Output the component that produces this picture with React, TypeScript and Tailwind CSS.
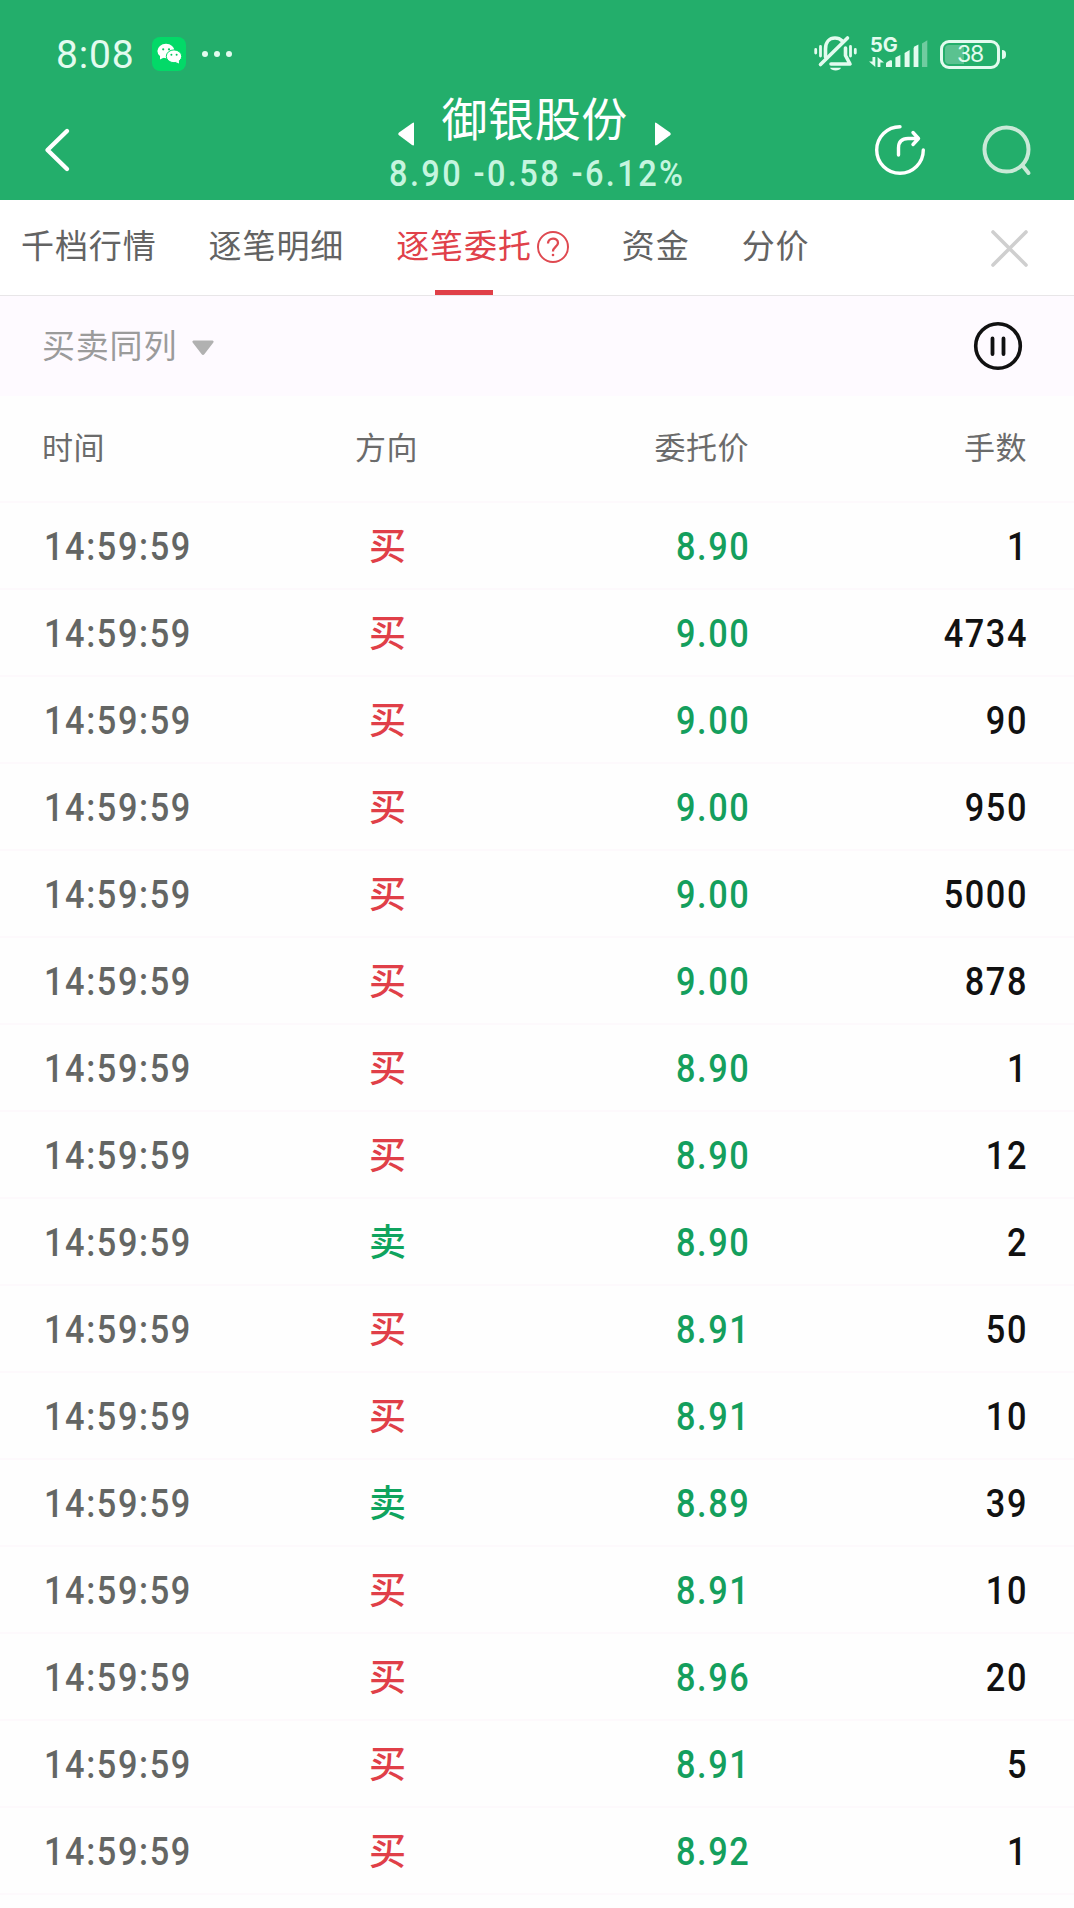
type Side = "buy" | "sell";

type Order = {
  side: Side;
  price: string;
  lots: number;
};

const orders: Order[] = [
  { side: "buy", price: "8.90", lots: 1 },
  { side: "buy", price: "9.00", lots: 4734 },
  { side: "buy", price: "9.00", lots: 90 },
  { side: "buy", price: "9.00", lots: 950 },
  { side: "buy", price: "9.00", lots: 5000 },
  { side: "buy", price: "9.00", lots: 878 },
  { side: "buy", price: "8.90", lots: 1 },
  { side: "buy", price: "8.90", lots: 12 },
  { side: "sell", price: "8.90", lots: 2 },
  { side: "buy", price: "8.91", lots: 50 },
  { side: "buy", price: "8.91", lots: 10 },
  { side: "sell", price: "8.89", lots: 39 },
  { side: "buy", price: "8.91", lots: 10 },
  { side: "buy", price: "8.96", lots: 20 },
  { side: "buy", price: "8.91", lots: 5 },
  { side: "buy", price: "8.92", lots: 1 },
];

const tabs = ["千档行情", "逐笔明细", "逐笔委托", "资金", "分价"];

function WechatIcon() {
  return (
    <svg className="ml-[18px] h-[34px] w-[34px]" viewBox="0 0 34 34">
      <rect width="34" height="34" rx="8" fill="#03d968" />
      <ellipse cx="14" cy="14" rx="8.6" ry="7.2" fill="#fff" />
      <path d="M8 18.5 L8 22.5 L13 20 Z" fill="#fff" />
      <ellipse cx="22" cy="19.3" rx="7.7" ry="6.4" fill="#fff" stroke="#03d968" strokeWidth="1" />
      <path d="M23.5 25 L27 26.5 L26.8 23 Z" fill="#fff" />
      <circle cx="11.2" cy="12.3" r="1.1" fill="#03c75f" />
      <circle cx="17" cy="12.3" r="1.1" fill="#03c75f" />
      <circle cx="19.4" cy="17.8" r="1" fill="#03c75f" />
      <circle cx="24.6" cy="17.8" r="1" fill="#03c75f" />
    </svg>
  );
}

function MutedBellIcon() {
  return (
    <svg className="h-[38px] w-[44px]" viewBox="0 0 44 38" fill="none" stroke="#e3fbef" strokeLinecap="round">
      <path d="M1.7 14.5 V18 M6.5 11.5 V21 M36.5 11.5 V21 M41.3 14.5 V18" strokeWidth="2.8" />
      <path
        d="M11.5 22 V14 C11.5 7 15.5 3 21 3 C24 3 26.3 4 28 5.8 M31.5 13 V20.5 L36 29 H17"
        strokeWidth="3.6"
        strokeLinejoin="round"
      />
      <path d="M33.5 3 L6.5 29.5" strokeWidth="3.6" />
      <path d="M16 32.8 H27 C25.8 36.5 17.5 36.5 16 32.8 Z" fill="#e3fbef" stroke="none" />
    </svg>
  );
}

function SignalIcon() {
  return (
    <div className="ml-[11px] grid h-[38px] w-[60px]">
      <span className="col-start-1 row-start-1 ml-[1px] font-['Inter'] text-[20px] leading-[20px] font-bold">
        5G
      </span>
      <svg className="col-start-1 row-start-1 h-[38px] w-[60px]" viewBox="0 0 60 38" fill="#e3fbef">
        <path d="M3.5 22 H6.3 V32 L0 26.5 H3.5 Z M8.6 32 V22 L15 27.5 H11.4 V32 Z" />
        <path d="M17 32 V28.5 C17 27 23 24 23 26 V32 Z" />
        <path d="M26.4 32 V22.5 L31.4 20 V32 Z" />
        <path d="M35.6 32 V18 L40.6 15 V32 Z" />
        <path d="M44.6 32 V13.5 Q44.6 12 46 11.2 L49.4 9.5 V32 Z" />
        <path d="M53 32 V8.5 L58.3 5.2 V32 Z" opacity="0.4" />
      </svg>
    </div>
  );
}

function Battery() {
  return (
    <div className="ml-[11px] flex items-center">
      <div className="grid h-[29px] w-[60px] rounded-[9px] border-[3px] border-[#e3fbef]">
        <div className="col-start-1 row-start-1 m-[2px] w-[19px] rounded-l-[4px] bg-white/25" />
        <span className="col-start-1 row-start-1 text-center font-['Inter'] text-[23px] leading-[23px] tracking-[-1.2px]">
          38
        </span>
      </div>
      <div className="ml-[2px] h-[9px] w-[4px] rounded-r-full bg-[#e3fbef]" />
    </div>
  );
}

function StatusBar() {
  return (
    <div className="flex h-[72px] items-start pt-[36px] pr-[68px] pl-[56px] text-[#e3fbef]">
      <span className="w-[78px] text-[39px] leading-[38px] tracking-[0.8px]">8:08</span>
      <div className="flex h-[36px] items-center">
        <WechatIcon />
        <div className="ml-[16px] flex gap-[6px]">
          <i className="h-[6px] w-[6px] rounded-full bg-[#e3fbef]" />
          <i className="h-[6px] w-[6px] rounded-full bg-[#e3fbef]" />
          <i className="h-[6px] w-[6px] rounded-full bg-[#e3fbef]" />
        </div>
      </div>
      <div className="ml-auto flex h-[36px] items-center">
        <MutedBellIcon />
        <SignalIcon />
        <Battery />
      </div>
    </div>
  );
}

function NavBar() {
  return (
    <div className="flex h-[128px] pr-[38px] pl-[40px]">
      <svg className="mt-[52px] h-[52px] w-[40px] shrink-0" viewBox="0 0 40 52" fill="none">
        <path d="M27 7 L7.5 26 L27 45" stroke="#fff" strokeWidth="4.4" strokeLinecap="round" strokeLinejoin="round" />
      </svg>

      <div className="ml-[303px] w-[302px] shrink-0">
        <div className="flex items-end justify-center pt-[16px]">
          <svg className="mb-[-2px] h-[24px] w-[17px]" viewBox="0 0 17 24">
            <path d="M16 1 Q16 0 14.5 1 L1 10.5 Q-0.5 12 1 13.2 L14 23 Q16 24 16 22.5 Z" fill="#fff" />
          </svg>
          <h1 className="mr-[26px] ml-[27px] w-[186px] font-['Noto_Sans_CJK_SC'] text-[46px] leading-[56px] font-normal tracking-[0.6px] whitespace-nowrap text-white">
            御银股份
          </h1>
          <svg className="mb-[-2px] h-[24px] w-[17px]" viewBox="0 0 17 24">
            <path d="M1 1 Q1 0 2.5 1 L16 10.5 Q17.5 12 16 13.2 L3 23 Q1 24 1 22.5 Z" fill="#fff" />
          </svg>
        </div>
        <p className="mt-[4px] ml-[6px] w-[340px] origin-left scale-x-88 text-[37px] leading-[52px] font-medium tracking-[2.7px] whitespace-nowrap text-[#c5f5df]">
          8.90 -0.58 -6.12%
        </p>
      </div>

      <svg className="mt-[50px] ml-auto h-[56px] w-[56px] shrink-0" viewBox="0 0 56 56" fill="none" stroke="#fff" strokeWidth="3.4" strokeLinecap="round" strokeLinejoin="round">
        <path d="M28 4.7 A23.3 23.3 0 1 0 51.3 28" />
        <path d="M26.5 33 V26 C26.5 20 29.5 16.5 36 16.5 H46 M41 10.5 L46.5 16.5 L41 22.5" />
      </svg>
      <svg className="mt-[50px] ml-[52px] h-[56px] w-[56px] shrink-0" viewBox="0 0 56 56" fill="none" stroke="#c9e9d7" strokeWidth="4" strokeLinecap="round">
        <circle cx="26.5" cy="27.5" r="22" />
        <path d="M42.5 43.5 L48.5 51" />
      </svg>
    </div>
  );
}

function HelpIcon() {
  return (
    <svg className="mt-[6px] ml-[4px] h-[34px] w-[34px]" viewBox="0 0 34 34" fill="none" stroke="#df4950" strokeWidth="2">
      <circle cx="17" cy="17" r="15" />
      <path d="M12 13.5 C12 7 22 7 22 13 C22 16.5 17 17 17 21.5" strokeWidth="2.3" />
      <circle cx="17" cy="25" r="1.3" fill="#df4950" stroke="none" />
    </svg>
  );
}

function TabBar() {
  return (
    <div className="flex h-[96px] border-b border-[#e8e6e8] bg-white pr-[44px] pl-[21px]">
      <div className="flex gap-[52px] font-['Noto_Sans_CJK_SC'] text-[33px] leading-[48px] tracking-[0.9px] text-[#636363]">
        {tabs.map((tab) =>
          tab === "逐笔委托" ? (
            <div key={tab} className="flex h-[95px] flex-col justify-between text-[#e0414a]">
              <div className="mt-[20px] flex items-center">
                {tab}
                <HelpIcon />
              </div>
              <div className="ml-[39px] h-[5px] w-[58px] bg-[#e04048]" />
            </div>
          ) : (
            <div key={tab} className="pt-[20px]">
              {tab}
            </div>
          )
        )}
      </div>
      <svg className="mt-[28px] ml-auto h-[40px] w-[40px]" viewBox="0 0 40 40">
        <path d="M3 4 L36 37 M36 4 L3 37" stroke="#cfcfcf" strokeWidth="3.6" strokeLinecap="round" />
      </svg>
    </div>
  );
}

function FilterBar() {
  return (
    <div className="flex h-[100px] items-center bg-[#fefaff] pr-[51px] pl-[42px]">
      <span className="mb-[5px] font-['Noto_Sans_CJK_SC'] text-[33px] leading-[48px] tracking-[0.8px] text-[#9b9b9b]">
        买卖同列
      </span>
      <svg className="mt-[4px] ml-[15px] h-[16px] w-[22px]" viewBox="0 0 22 16">
        <path d="M1.5 0.5 H20.5 Q22.5 1 21 3 L12.5 14 Q11 16 9.5 14 L1 3 Q-0.5 1 1.5 0.5 Z" fill="#b1b1b1" />
      </svg>
      <svg className="ml-auto h-[50px] w-[50px]" viewBox="0 0 50 50" fill="none" stroke="#111" strokeLinecap="round">
        <circle cx="25" cy="25" r="22.3" strokeWidth="3.6" />
        <path d="M19.5 17.5 V33 M30.5 17.5 V33" strokeWidth="3.8" />
      </svg>
    </div>
  );
}

function OrderRow({ order }: { order: Order }) {
  const isBuy = order.side === "buy";

  return (
    <div className="grid h-[87px] grid-cols-[300px_405px_1fr] items-center border-b-2 border-[#fdf9fc] pr-[48px] pl-[43px] text-[39px] leading-[46px] font-medium">
      <span className="mt-[2px] ml-[1px] origin-left scale-x-88 tracking-[1.8px] text-[#646664]">14:59:59</span>
      <div className="flex items-center justify-between">
        <span
          className={
            isBuy
              ? "mb-[4px] ml-[26px] font-['Noto_Sans_CJK_SC'] text-[37px] text-[#e03f48]"
              : "mb-[4px] ml-[26px] font-['Noto_Sans_CJK_SC'] text-[37px] text-[#0fa45e]"
          }
        >
          {isBuy ? "买" : "卖"}
        </span>
        <span className="mt-[2px] mr-[-2px] origin-right scale-x-88 tracking-[1.7px] text-[#149f5d]">{order.price}</span>
      </div>
      <span className="mt-[2px] mr-[-2px] origin-right scale-x-88 text-right tracking-[1.8px] text-[#111]">
        {order.lots}
      </span>
    </div>
  );
}

export default function App() {
  return (
    <div className="h-[1908px] w-[1074px] overflow-hidden bg-[#fefefe] font-['Roboto','Noto_Sans_CJK_SC',sans-serif]">
      <header className="h-[200px] bg-[#23ae6b]">
        <StatusBar />
        <NavBar />
      </header>

      <TabBar />
      <FilterBar />

      {/* Order table */}
      <div className="grid h-[107px] grid-cols-[313px_394px_1fr] items-center border-b-2 border-[#fdf9fc] pr-[47px] pb-[4px] pl-[42px] font-['Noto_Sans_CJK_SC'] text-[31px] tracking-[0.5px] text-[#6b6b6b]">
        <span>时间</span>
        <div className="flex justify-between">
          <span>方向</span>
          <span>委托价</span>
        </div>
        <span className="text-right">手数</span>
      </div>
      {orders.map((order, i) => (
        <OrderRow key={i} order={order} />
      ))}
    </div>
  );
}
